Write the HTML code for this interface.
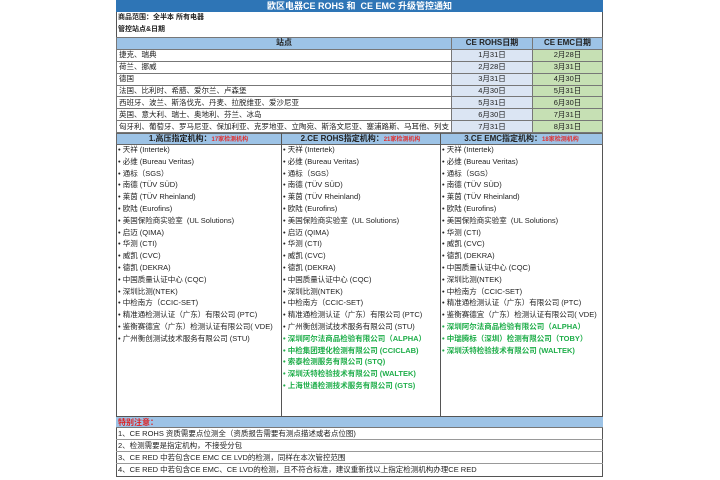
<!DOCTYPE html><html><head><meta charset="utf-8"><style>
*{margin:0;padding:0;box-sizing:border-box}
body{width:720px;height:480px;background:#fff;font-family:"Liberation Sans","Noto Sans CJK SC",sans-serif;font-size:7.5px;color:#222;position:relative;overflow:hidden}
.a{position:absolute;white-space:nowrap;line-height:12px}
.box{position:absolute;left:116px;top:0;width:487px;height:477px;border:1px solid #555}
table{position:absolute;border-collapse:collapse;left:116px;top:37px;width:487px}
td{border:1px solid #777;height:11.9px;line-height:10px;font-size:7.5px;padding:0 2px;white-space:nowrap}
.h{background:#9dc3e6;font-weight:bold;text-align:center;font-size:8px}
.r{background:#dbe5f3;text-align:center}
.g{background:#c6e0b4;text-align:center}
.col{position:absolute;top:145px;height:271px;border-left:1px solid #555}
.li{line-height:11.8px}
.gr{color:#1fae4a;font-weight:bold}
.red{color:#e03030;font-size:6px;font-weight:bold}
</style></head><body>
<div class="box"></div>
<div class="a" style="left:116px;top:0;width:487px;height:12px;background:#2e75b6;color:#fff;text-align:center;font-weight:bold;font-size:9px">欧区电器CE ROHS 和&nbsp; CE EMC 升级管控通知</div>
<div class="a" style="left:118px;top:12px;font-weight:bold;font-size:7px">商品范围：全半本 所有电器</div>
<div class="a" style="left:118px;top:24px;font-weight:bold;font-size:7px">管控站点&amp;日期</div>
<table>
<tr><td class="h" style="width:324px">站点</td><td class="h" style="width:81px">CE ROHS日期</td><td class="h">CE EMC日期</td></tr>
<tr><td>捷克、瑞典</td><td class="r">1月31日</td><td class="g">2月28日</td></tr>
<tr><td>荷兰、挪威</td><td class="r">2月28日</td><td class="g">3月31日</td></tr>
<tr><td>德国</td><td class="r">3月31日</td><td class="g">4月30日</td></tr>
<tr><td>法国、比利时、希腊、爱尔兰、卢森堡</td><td class="r">4月30日</td><td class="g">5月31日</td></tr>
<tr><td>西班牙、波兰、斯洛伐克、丹麦、拉脱维亚、爱沙尼亚</td><td class="r">5月31日</td><td class="g">6月30日</td></tr>
<tr><td>英国、意大利、瑞士、奥地利、芬兰、冰岛</td><td class="r">6月30日</td><td class="g">7月31日</td></tr>
<tr><td>匈牙利、葡萄牙、罗马尼亚、保加利亚、克罗地亚、立陶宛、斯洛文尼亚、塞浦路斯、马耳他、列支</td><td class="r">7月31日</td><td class="g">8月31日</td></tr>
</table>
<div class="a" style="left:116px;top:133px;width:487px;height:12px;background:#9dc3e6;border:1px solid #666"></div>
<div class="a" style="left:116px;top:133px;width:165px;text-align:center;font-weight:bold;font-size:8px">1.高压指定机构：<span class="red">17家检测机构</span></div>
<div class="a" style="left:281px;top:133px;width:159px;text-align:center;font-weight:bold;font-size:8px">2.CE ROHS指定机构：<span class="red">21家检测机构</span></div>
<div class="a" style="left:440px;top:133px;width:163px;text-align:center;font-weight:bold;font-size:8px">3.CE EMC指定机构：<span class="red">18家检测机构</span></div>
<div class="col" style="left:281px;top:133px;height:283px"></div><div class="col" style="left:440px;top:133px;height:283px"></div>
<div class="a li" style="left:118px;top:144px">• 天祥 (Intertek)<br>• 必维 (Bureau Veritas)<br>• 通标（SGS）<br>• 南德 (TÜV SÜD)<br>• 莱茵 (TÜV Rheinland)<br>• 欧陆 (Eurofins)<br>• 美国保险商实验室&nbsp; (UL Solutions)<br>• 启迈 (QIMA)<br>• 华测 (CTI)<br>• 威凯 (CVC)<br>• 德凯 (DEKRA)<br>• 中国质量认证中心 (CQC)<br>• 深圳比测(NTEK)<br>• 中检南方（CCIC-SET)<br>• 精准通检测认证（广东）有限公司 (PTC)<br>• 鉴衡赛德宜（广东）检测认证有限公司( VDE)<br>• 广州衡创测试技术服务有限公司 (STU)</div>
<div class="a li" style="left:283px;top:144px">• 天祥 (Intertek)<br>• 必维 (Bureau Veritas)<br>• 通标（SGS）<br>• 南德 (TÜV SÜD)<br>• 莱茵 (TÜV Rheinland)<br>• 欧陆 (Eurofins)<br>• 美国保险商实验室&nbsp; (UL Solutions)<br>• 启迈 (QIMA)<br>• 华测 (CTI)<br>• 威凯 (CVC)<br>• 德凯 (DEKRA)<br>• 中国质量认证中心 (CQC)<br>• 深圳比测(NTEK)<br>• 中检南方（CCIC-SET)<br>• 精准通检测认证（广东）有限公司 (PTC)<br>• 广州衡创测试技术服务有限公司 (STU)<br><span class="gr">• 深圳阿尔法商品检验有限公司（ALPHA）<br>• 中检集团理化检测有限公司 (CCICLAB)<br>• 索泰检测服务有限公司 (STQ)<br>• 深圳沃特检验技术有限公司 (WALTEK)<br>• 上海世通检测技术服务有限公司 (GTS)</span></div>
<div class="a li" style="left:442px;top:144px">• 天祥 (Intertek)<br>• 必维 (Bureau Veritas)<br>• 通标（SGS）<br>• 南德 (TÜV SÜD)<br>• 莱茵 (TÜV Rheinland)<br>• 欧陆 (Eurofins)<br>• 美国保险商实验室&nbsp; (UL Solutions)<br>• 华测 (CTI)<br>• 威凯 (CVC)<br>• 德凯 (DEKRA)<br>• 中国质量认证中心 (CQC)<br>• 深圳比测(NTEK)<br>• 中检南方（CCIC-SET)<br>• 精准通检测认证（广东）有限公司 (PTC)<br>• 鉴衡赛德宜（广东）检测认证有限公司( VDE)<br><span class="gr">• 深圳阿尔法商品检验有限公司（ALPHA）<br>• 中瑞腾标（深圳）检测有限公司（TOBY）<br>• 深圳沃特检验技术有限公司 (WALTEK)</span></div>
<div class="a" style="left:116px;top:416px;width:487px;height:12px;background:#9dc3e6;border-top:1px solid #555;border-bottom:1px solid #777;color:#e02020;font-weight:bold;font-size:8px;padding-left:2px;line-height:11px">特别注意：</div>
<div class="a" style="left:116px;top:428px;width:487px;border-bottom:1px solid #999;height:12px;padding-left:2px;line-height:11px">1、CE ROHS 资质需要点位测全（资质报告需要有测点描述或者点位图)</div>
<div class="a" style="left:116px;top:440px;width:487px;border-bottom:1px solid #999;height:12px;padding-left:2px;line-height:11px">2、检测需要是指定机构，不接受分包</div>
<div class="a" style="left:116px;top:452px;width:487px;border-bottom:1px solid #999;height:12px;padding-left:2px;line-height:11px">3、CE RED 中若包含CE EMC CE LVD的检测，同样在本次管控范围</div>
<div class="a" style="left:116px;top:464px;width:487px;height:12px;padding-left:2px;line-height:11px">4、CE RED 中若包含CE EMC、CE LVD的检测，且不符合标准，建议重新找以上指定检测机构办理CE RED</div>
</body></html>
